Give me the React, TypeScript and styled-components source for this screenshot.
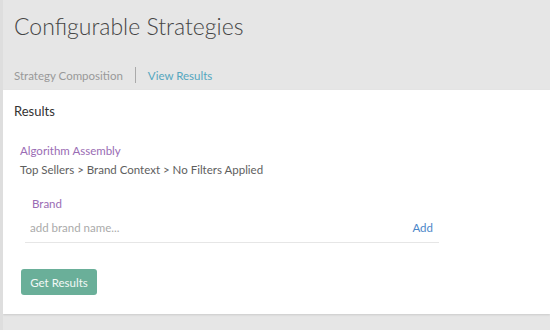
import React from 'react';
import styled, { createGlobalStyle } from 'styled-components';

const GlobalStyle = createGlobalStyle`
  html, body {
    margin: 0;
    padding: 0;
    background-color: #e6e6e6;
    font-family: Lato, 'Open Sans', sans-serif;
  }
`;

const Page = styled.div`
  width: 550px;
  height: 330px;
  overflow: hidden;
  background-color: #e6e6e6;
  border-left: 3px solid #dedede;
  box-sizing: border-box;
`;

const Header = styled.header`
  padding: 10px 0 0 11px;
  height: 90px;
  box-sizing: border-box;
`;

const Title = styled.h1`
  margin: 0;
  font-size: 23px;
  font-weight: 300;
  color: #454545;
  line-height: 32px;
`;

const Tabs = styled.nav`
  display: flex;
  align-items: center;
  margin-top: 25px;
  font-size: 11.5px;
`;

const Tab = styled.span<{ active?: boolean }>`
  color: ${(props) => (props.active ? '#55a6bf' : '#999')};
`;

const Divider = styled.span`
  width: 1px;
  height: 16px;
  background-color: #aaa;
  margin: 0 12px;
`;

const Panel = styled.section`
  background-color: #fff;
  height: 224px;
  padding: 12px 11px 0;
  box-sizing: border-box;
  box-shadow: 0 1px 2px rgba(0, 0, 0, 0.12);
`;

const PanelTitle = styled.h2`
  margin: 0;
  font-size: 13px;
  font-weight: 400;
  color: #333;
  line-height: 18px;
`;

const Assembly = styled.div`
  margin: 21px 0 0 6px;
  font-size: 11.5px;
  line-height: 19px;
`;

const Label = styled.div`
  color: #9a6cb4;
`;

const Path = styled.div`
  color: #5e5e5e;
`;

const Field = styled.div`
  margin: 16px 0 0 11px;
  width: 414px;
`;

const FieldLabel = styled(Label)`
  font-size: 11.5px;
  padding-left: 7px;
  line-height: 18px;
`;

const InputRow = styled.div`
  display: flex;
  align-items: center;
  border-bottom: 1px solid #e6e6e6;
  height: 29px;
  padding: 0 6px 0 5px;
`;

const Input = styled.input`
  flex: 1;
  border: none;
  outline: none;
  font-family: inherit;
  font-size: 11.5px;
  color: #333;
  padding: 0;
  background: transparent;

  &::placeholder {
    color: #aaa;
  }
`;

const AddLink = styled.span`
  font-size: 11.5px;
  color: #4a86c8;
`;

const Button = styled.button`
  margin: 26px 0 0 7px;
  width: 76px;
  height: 26px;
  border: none;
  border-radius: 3px;
  background-color: #6aaf99;
  color: #f2f8f6;
  font-family: inherit;
  font-size: 11.5px;
  padding: 0;
`;

export default function App() {
  return (
    <>
      <GlobalStyle />
      <Page>
        <Header>
          <Title>Configurable Strategies</Title>
          <Tabs>
            <Tab>Strategy Composition</Tab>
            <Divider />
            <Tab active>View Results</Tab>
          </Tabs>
        </Header>
        <Panel>
          <PanelTitle>Results</PanelTitle>
          <Assembly>
            <Label>Algorithm Assembly</Label>
            <Path>Top Sellers &gt; Brand Context &gt; No Filters Applied</Path>
          </Assembly>
          <Field>
            <FieldLabel>Brand</FieldLabel>
            <InputRow>
              <Input placeholder="add brand name..." />
              <AddLink>Add</AddLink>
            </InputRow>
          </Field>
          <Button>Get Results</Button>
        </Panel>
      </Page>
    </>
  );
}
